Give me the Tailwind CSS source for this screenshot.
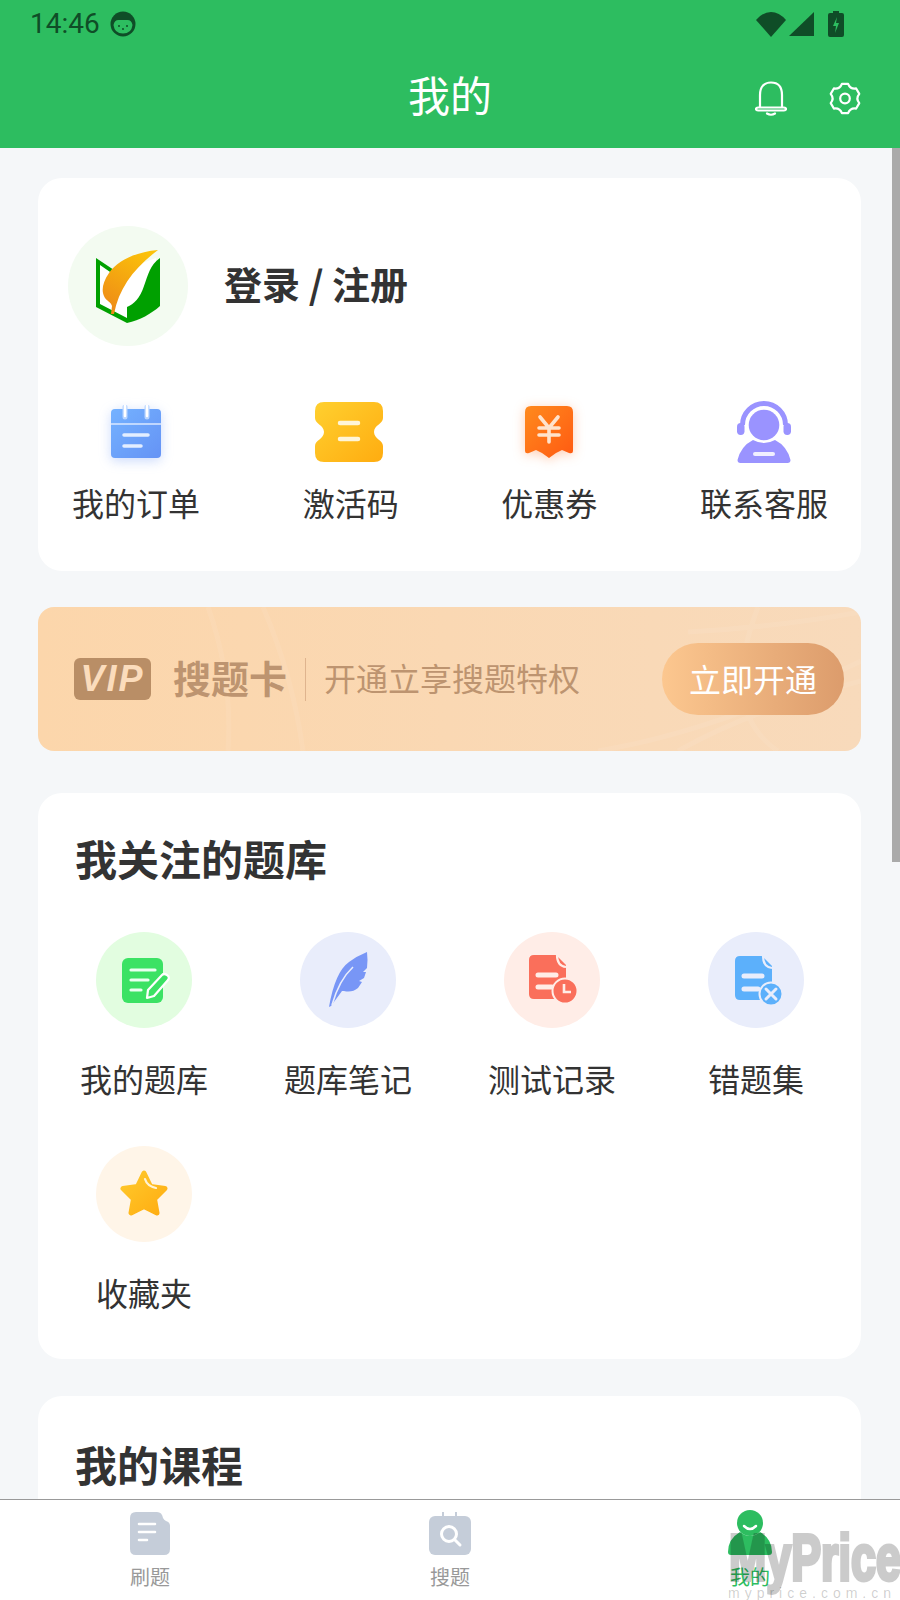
<!DOCTYPE html>
<html>
	<head>
		<meta charset="UTF-8" />
		<title>我的</title>
		<script src="https://cdn.jsdelivr.net/npm/@tailwindcss/browser@4"></script>
	</head>
	<body class="relative w-[900px] h-[1600px] overflow-hidden bg-[#f5f7f9] font-['Noto_Sans_CJK_SC','Noto_Sans',sans-serif] text-[#333]">
		<!-- header -->
		<header class="h-[148px] bg-[#2dbd60]">
			<div class="flex items-center h-[48px] pl-[30px] pr-[56px] text-[#0f4d27]">
				<span class="text-[28px] font-['Roboto',sans-serif]">14:46</span>
				<svg class="ml-[10px]" width="26" height="26" viewBox="0 0 26 26"><circle cx="13" cy="13" r="12.500" fill="#0f4d27"/><path d="M3.500 14q1-5 5-5h9q4 0 5 5q-1 8.500-9.500 8.500T3.500 14z" fill="#2dbd60"/><circle cx="9" cy="15" r="1" fill="#0f4d27"/><circle cx="17" cy="15" r="1" fill="#0f4d27"/><circle cx="13" cy="18" r="1" fill="#0f4d27"/></svg>
				<div class="ml-auto flex items-center">
					<svg width="30" height="26" viewBox="0 0 30 26"><path d="M0 9Q7 1 15 1t15 8L15 26z" fill="#0f4d27"/></svg>
					<svg class="ml-[3px]" width="25" height="26" viewBox="0 0 25 26"><path d="M0 25L25 1v24z" fill="#0f4d27"/></svg>
					<svg class="ml-[14px]" width="16" height="26" viewBox="0 0 16 26"><path d="M5 0h6v2h3q2 0 2 2v20q0 2-2 2H2q-2 0-2-2V4q0-2 2-2h3z" fill="#0f4d27"/><path d="M9 6l-4 9h3l-1 7 4-10H8z" fill="#2dbd60"/></svg>
				</div>
			</div>
			<div class="grid grid-cols-3 items-center h-[48px] mt-[22px] px-[39px]">
				<div></div>
				<h1 class="text-center text-[42px] leading-[48px] text-white">我的</h1>
				<div class="flex justify-end items-center gap-[42px] pt-[8px]">
					<svg width="32" height="35" viewBox="0 0 32 35" fill="none" stroke="#fff" stroke-width="2.200" stroke-linecap="round" stroke-linejoin="round"><path d="M5 26V14C5 6 9 1.500 16 1.500S27 6 27 14V26"/><path d="M3 26.500H29Q31 26.500 31 28T29 29.500H3Q1 29.500 1 28T3 26.500Z"/><path d="M12 32.500Q16 35 20 32.500"/></svg>
					<svg width="32" height="33" viewBox="0 0 32 33" fill="none" stroke="#fff" stroke-width="2.200" stroke-linejoin="round"><path d="M12.900 1.800H19.100Q21.250 7.400 27.150 6.460L30.270 11.860Q26.500 16.500 30.270 21.140L27.150 26.540Q21.250 25.600 19.100 31.200H12.900Q10.750 25.600 4.850 26.540L1.730 21.140Q5.500 16.500 1.730 11.860L4.850 6.460Q10.750 7.400 12.900 1.800Z"/><circle cx="16" cy="16.500" r="4.800"/></svg>
				</div>
			</div>
		</header>

		<!-- scrollbar -->
		<div class="absolute left-[892px] top-[148px] w-[8px] h-[714px] bg-[#aaaaaa]"></div>

		<main class="pl-[38px] pr-[39px] pt-[30px]">
			<!-- login card -->
			<section class="bg-white rounded-[24px] h-[393px] pt-[48px]">
				<div class="flex items-center pl-[30px]">
					<div class="w-[120px] h-[120px] rounded-full bg-[#f3fbf1] flex items-center justify-center">
						<svg class="mt-[2px]" width="64" height="74" viewBox="0 0 64 74">
							<defs>
								<linearGradient id="leaf" x1="0.7" y1="0" x2="0.2" y2="1"><stop offset="0" stop-color="#fbc10a"/><stop offset="1" stop-color="#ee8a17"/></linearGradient>
							</defs>
							<path d="M2 12l17 11L60 8V58L31 72 2 56z" fill="#fff"/>
							<path d="M0 8L18 20 17 24 4 15V54L31 68V73L0 57z" fill="#00a000"/>
							<path d="M64 8C54 15 52 25 48 36 44 48 38 54 31 57V73C44 70 55 64 64 56z" fill="#00a000"/>
							<path d="M62 0C40 2 22 10 13 23 6 33 5 42 9 48c2 3 6 4 7 8l-1 8h3C23 38 38 18 62 0z" fill="url(#leaf)"/>
						</svg>
					</div>
					<div class="ml-[36px] mb-[6px] text-[38px] font-bold leading-[48px]">登录 / 注册</div>
				</div>
				<div class="flex justify-between pl-[34px] pr-[33px] mt-[55px]">
					<div class="flex flex-col items-center">
						<div class="h-[62px] flex items-center justify-center">
							<svg class="drop-shadow-[0_3px_6px_#6593f555]" width="52" height="54" viewBox="0 0 52 54">
								<defs>
									<linearGradient id="cal" x1="0" y1="0" x2="1" y2="1"><stop offset="0" stop-color="#74b2ff"/><stop offset="1" stop-color="#6593f5"/></linearGradient>
								</defs>
								<path d="M5 4h42q4 0 4 4v41q0 4-4 4H5q-4 0-4-4V8q0-4 4-4z" fill="url(#cal)"/>
								<path d="M1 19h50" stroke="#dbe9ff" stroke-width="1.500"/>
								<path d="M15 2v10M37 2v10" stroke="#b9d5ff" stroke-width="5" stroke-linecap="round"/>
								<path d="M15 0v11M37 0v11" stroke="#fff" stroke-width="2.500" stroke-linecap="round"/>
								<path d="M14 30h24M14 41h17" stroke="#e3eeff" stroke-width="3.500" stroke-linecap="round"/>
							</svg>
						</div>
						<div class="text-[32px] leading-[48px] mt-[15px]">我的订单</div>
					</div>
					<div class="flex flex-col items-center">
						<div class="h-[62px] flex items-center justify-center mr-[4px]">
							<svg width="68" height="60" viewBox="0 0 68 60">
								<defs>
									<linearGradient id="tic" x1="0" y1="0" x2="1" y2="1"><stop offset="0" stop-color="#ffd02f"/><stop offset="1" stop-color="#ffac10"/></linearGradient>
								</defs>
								<path d="M9 0H59Q68 0 68 9V16C68 22 59 23 59 30S68 38 68 44V51Q68 60 59 60H9Q0 60 0 51V44C0 38 9 37 9 30S0 22 0 16V9Q0 0 9 0Z" fill="url(#tic)"/>
								<path d="M25 21h18M25 37h18" stroke="#fff5d8" stroke-width="4.500" stroke-linecap="round"/>
							</svg>
						</div>
						<div class="text-[32px] leading-[48px] mt-[15px]">激活码</div>
					</div>
					<div class="flex flex-col items-center">
						<div class="h-[62px] flex items-center justify-center">
							<svg class="drop-shadow-[0_2px_6px_#ff6a1855]" width="50" height="54" viewBox="0 0 50 54">
								<defs>
									<linearGradient id="cou" x1="0" y1="0" x2="1" y2="1"><stop offset="0" stop-color="#ff8a1d"/><stop offset="1" stop-color="#ff5a12"/></linearGradient>
								</defs>
								<path d="M7 1h36q6 0 6 6v39q0 3-4 2l-7-3-6 3-7 5-7-5-6-3-7 3q-4 1-4-2V7q0-6 6-6z" fill="url(#cou)"/>
								<path d="M16 12l9 11 9-11M15 23h20M15 30h20M25 23v14" fill="none" stroke="#ffe3cc" stroke-width="3.600" stroke-linecap="round"/>
							</svg>
						</div>
						<div class="text-[32px] leading-[48px] mt-[15px]">优惠券</div>
					</div>
					<div class="flex flex-col items-center">
						<div class="h-[62px] flex items-center justify-center">
							<svg width="54" height="62" viewBox="0 0 54 62" fill="#9a93ff">
								<path d="M5.500 24a21.500 21.500 0 0 1 43 0" fill="none" stroke="#9a93ff" stroke-width="5"/>
								<rect x="0" y="22" width="7.500" height="12" rx="3.700"/>
								<rect x="46.500" y="22" width="7.500" height="12" rx="3.700"/>
								<circle cx="27" cy="24" r="15.300"/>
								<path d="M16 39q11 6 22 0 12 6 15.500 20 0 3-3 3H3.500q-3 0-3-3Q4 45 16 39z"/>
								<rect x="16" y="51" width="22" height="4" rx="2" fill="#f0efff"/>
							</svg>
						</div>
						<div class="text-[32px] leading-[48px] mt-[15px]">联系客服</div>
					</div>
				</div>
			</section>

			<!-- vip banner -->
			<section class="relative overflow-hidden mt-[36px] h-[144px] rounded-[16px] bg-gradient-to-r from-[#fcd6ab] to-[#f8dabb] flex items-center pl-[36px] pr-[17px]">
				<svg class="absolute inset-0" width="823" height="144" viewBox="0 0 823 144" fill="none" stroke="#fff" stroke-opacity=".07" stroke-width="5">
					<path d="M170 0q25 70 20 144M225 0q30 70 40 144M740 144q-60-40-20-144M560 144q120-20 263-90M640 144q70-40 183-70M650 25Q740 20 823 5"/>
				</svg>
				<div class="relative w-[77px] h-[42px] rounded-[6px] bg-[#b98e66] flex items-center justify-center text-[#fbdcbc] text-[36px] tracking-[2px] leading-none font-bold italic font-['Liberation_Sans',sans-serif]">VIP</div>
				<div class="relative ml-[22px] mb-[5px] text-[38px] font-bold text-[#bd9470] leading-[48px]">搜题卡</div>
				<div class="relative ml-[18px] w-px h-[43px] bg-[#dfb48e]"></div>
				<div class="relative ml-[18px] mb-[5px] text-[32px] text-[#bd9470] leading-[48px]">开通立享搜题特权</div>
				<button class="relative ml-auto w-[182px] h-[72px] pb-[3px] rounded-full bg-gradient-to-r from-[#fcc78f] to-[#dc9c6c] text-white text-[32px]">立即开通</button>
			</section>

			<!-- followed -->
			<section class="mt-[42px] bg-white rounded-[24px] h-[566px] pt-[40px]">
				<h2 class="pl-[37px] text-[42px] font-bold leading-[50px]">我关注的题库</h2>
				<div class="grid grid-cols-4 w-[816px] ml-[4px] mt-[49px] gap-y-[44px]">
					<div class="flex flex-col items-center">
						<div class="w-[96px] h-[96px] rounded-full bg-[#e2fde0] flex items-center justify-center">
							<svg class="ml-[4px]" width="50" height="48" viewBox="0 0 50 48">
								<rect x="1" y="2" width="41" height="45" rx="6" fill="#3be264"/>
								<path d="M10 14h24M10 24h17M10 34h10" stroke="#e9fff0" stroke-width="3.200" stroke-linecap="round"/>
								<path d="M26 42l1-8 14-15q2-2 5 0t1 5L33 40z" fill="#3be264" stroke="#fff" stroke-width="2.200" stroke-linejoin="round"/>
							</svg>
						</div>
						<div class="text-[32px] leading-[48px] mt-[26px]">我的题库</div>
					</div>
					<div class="flex flex-col items-center">
						<div class="w-[96px] h-[96px] rounded-full bg-[#e9edfb] flex items-center justify-center">
							<svg class="ml-[2px]" width="40" height="56" viewBox="0 0 40 56" fill="#7896f6">
								<path d="M38 0q1 8 0 16l-4 4 3 0-2 6-5 3 3 1-4 6q-6 5-14 3l-2 0L2 54 0 55Q6 20 20 10 28 4 38 0z"/>
								<path d="M3 53Q10 28 24 15" stroke="#e9edfb" stroke-width="1.600" fill="none"/>
							</svg>
						</div>
						<div class="text-[32px] leading-[48px] mt-[26px]">题库笔记</div>
					</div>
					<div class="flex flex-col items-center">
						<div class="w-[96px] h-[96px] rounded-full bg-[#ffede7] flex items-center justify-center">
							<svg width="48" height="50" viewBox="0 0 48 50" class="ml-[2px]">
								<path d="M5 0h22l10 10v34H5q-5 0-5-5V5q0-5 5-5z" fill="#fa6f5b"/>
								<path d="M28 0q0 11 9 12" fill="none" stroke="#ffede7" stroke-width="2.200"/>
								<path d="M9 20h18M9 32h14" stroke="#ffede7" stroke-width="5" stroke-linecap="round"/>
								<circle cx="36" cy="36" r="12.500" fill="#fa6f5b" stroke="#ffede7" stroke-width="2"/>
								<path d="M35 29v8h7" fill="none" stroke="#ffede7" stroke-width="2.600"/>
							</svg>
						</div>
						<div class="text-[32px] leading-[48px] mt-[26px]">测试记录</div>
					</div>
					<div class="flex flex-col items-center">
						<div class="w-[96px] h-[96px] rounded-full bg-[#e9edfb] flex items-center justify-center">
							<svg width="48" height="50" viewBox="0 0 48 50" class="ml-[5px] mt-[2px]">
								<path d="M5 0h22l10 10v34H5q-5 0-5-5V5q0-5 5-5z" fill="#5cb0fb"/>
								<path d="M28 0q0 11 9 12" fill="none" stroke="#e9edfb" stroke-width="2.200"/>
								<path d="M9 20h18M9 33h14" stroke="#e9edfb" stroke-width="5" stroke-linecap="round"/>
								<circle cx="36" cy="38" r="11.500" fill="#5cb0fb" stroke="#e9edfb" stroke-width="2"/>
								<path d="M31 33l10 10M41 33L31 43" stroke="#e9edfb" stroke-width="3" stroke-linecap="round"/>
							</svg>
						</div>
						<div class="text-[32px] leading-[48px] mt-[26px]">错题集</div>
					</div>
					<div class="flex flex-col items-center">
						<div class="w-[96px] h-[96px] rounded-full bg-[#fff5e8] flex items-center justify-center">
							<svg class="mb-[3px]" width="48" height="46" viewBox="0 0 48 46">
								<defs>
									<linearGradient id="star" x1="0" y1="0" x2="1" y2="1"><stop offset="0" stop-color="#ffc92b"/><stop offset="1" stop-color="#ffad12"/></linearGradient>
								</defs>
								<path d="M24 3l6.500 13.500L45 18.500 34.500 29 37 43 24 36.500 11 43l2.500-14L3 18.500l14.500-2z" fill="url(#star)" stroke="url(#star)" stroke-width="5" stroke-linejoin="round"/>
								<path d="M25 9q2 7 11 9" fill="none" stroke="#fff3d4" stroke-width="2.200" stroke-linecap="round"/>
							</svg>
						</div>
						<div class="text-[32px] leading-[48px] mt-[26px]">收藏夹</div>
					</div>
				</div>
			</section>

			<!-- courses -->
			<section class="mt-[37px] bg-white rounded-t-[24px] h-[220px] pt-[43px]">
				<h2 class="pl-[37px] text-[42px] font-bold leading-[50px]">我的课程</h2>
			</section>
		</main>

		<!-- tab bar -->
		<nav class="absolute left-0 right-0 bottom-0 h-[101px] bg-white border-t border-[#999] grid grid-cols-3 text-[20px] text-[#999]">
			<div class="flex flex-col items-center pt-[9px]">
				<div class="h-[46px] flex items-end">
					<svg width="40" height="43" viewBox="0 0 40 43" fill="#c5cdd9">
						<path d="M6 0h21q5 0 6 6 1 2 3 3 4 1 4 5v23q0 6-6 6H6q-6 0-6-6V6q0-6 6-6z"/>
						<path d="M9 12h16M9 20h16M9 28h8" stroke="#fff" stroke-width="2.600" stroke-linecap="round"/>
					</svg>
				</div>
				<span class="leading-[24px] mt-[10px]">刷题</span>
			</div>
			<div class="flex flex-col items-center pt-[9px]">
				<div class="h-[46px] flex items-end">
					<svg width="42" height="43" viewBox="0 0 42 43" fill="#c5cdd9">
						<path d="M14 0v5M27 0v5" stroke="#c5cdd9" stroke-width="2"/>
						<rect x="0" y="4" width="42" height="39" rx="6"/>
						<circle cx="20" cy="22" r="7.500" fill="none" stroke="#fff" stroke-width="3"/>
						<path d="M26 28l5 5" stroke="#fff" stroke-width="3" stroke-linecap="round"/>
					</svg>
				</div>
				<span class="leading-[24px] mt-[10px]">搜题</span>
			</div>
			<div class="flex flex-col items-center pt-[9px] text-[#2dbd60]">
				<div class="h-[46px] flex items-end">
					<svg width="44" height="45" viewBox="0 0 44 45" fill="#2dbd60">
						<circle cx="22" cy="13" r="13"/>
						<path d="M16 16q6 6 12 0" fill="none" stroke="#fff" stroke-width="2.500" stroke-linecap="round"/>
						<path d="M12 22q10 8 20 0 12 7 12 20 0 3-3 3H3q-3 0-3-3 0-13 12-20z"/>
					</svg>
				</div>
				<span class="leading-[24px] mt-[10px]">我的</span>
			</div>
		</nav>

		<!-- watermark -->
		<div class="absolute left-[729px] top-[1518px] text-[64px] leading-[80px] font-bold text-black opacity-20 [-webkit-text-stroke:4px_black] font-['Liberation_Sans',sans-serif] scale-x-[.7] origin-left whitespace-nowrap">MyPrice</div>
		<div class="absolute left-[728px] top-[1585px] text-[14px] leading-[16px] tracking-[5px] text-black/20 font-['Liberation_Sans',sans-serif] whitespace-nowrap">myprice.com.cn</div>
	</body>
</html>
